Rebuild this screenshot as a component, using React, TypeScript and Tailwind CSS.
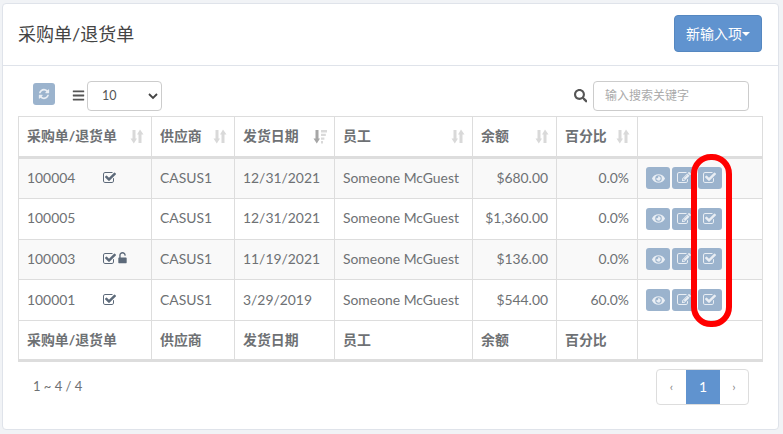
import { FaBars, FaEye, FaSearch } from "react-icons/fa";

const FONT = { fontFamily: 'Lato, "Noto Sans CJK SC", sans-serif' };

const rows = [
  { id: "100004", date: "12/31/2021", amount: "$680.00", pct: "0.0%", check: true, lock: false },
  { id: "100005", date: "12/31/2021", amount: "$1,360.00", pct: "0.0%", check: false, lock: false },
  { id: "100003", date: "11/19/2021", amount: "$136.00", pct: "0.0%", check: true, lock: true },
  { id: "100001", date: "3/29/2019", amount: "$544.00", pct: "60.0%", check: true, lock: false },
];

const headers = [
  { label: "采购单/退货单", w: "w-[133px]" },
  { label: "供应商", w: "w-[83px]" },
  { label: "发货日期", w: "w-[100px]", active: true },
  { label: "员工", w: "w-[138px]" },
  { label: "余额", w: "w-[84px]" },
  { label: "百分比", w: "w-[81px]" },
];

const ICONS = {
  check:
    "M1408 930v318q0 119-84.5 203.5t-203.5 84.5h-832q-119 0-203.5-84.5t-84.5-203.5v-832q0-119 84.5-203.5t203.5-84.5h832q63 0 117 25 15 7 18 23 3 17-9 29l-49 49q-10 10-23 10-3 0-9-2-23-6-45-6h-832q-66 0-113 47t-47 113v832q0 66 47 113t113 47h832q66 0 113-47t47-113v-254q0-13 9-22l64-64q10-10 23-10 6 0 12 3 20 8 20 29zm231-489l-814 814q-24 24-57 24t-57-24l-430-430q-24-24-24-57t24-57l110-110q24-24 57-24t57 24l263 263 647-647q24-24 57-24t57 24l110 110q24 24 24 57t-24 57z",
  edit:
    "M888 1184l116-116-152-152-116 116v56h96v96h56zm440-720q-16-16-33 1l-350 350q-17 17-1 33t33-1l350-350q17-17 1-33zm80 594v190q0 119-84.5 203.5t-203.5 84.5h-832q-119 0-203.5-84.5t-84.5-203.5v-832q0-119 84.5-203.5t203.5-84.5h832q63 0 117 25 15 7 18 23 3 17-9 29l-49 49q-14 14-32 8-23-6-45-6h-832q-66 0-113 47t-47 113v832q0 66 47 113t113 47h832q66 0 113-47t47-113v-126q0-13 9-22l64-64q15-15 35-7t20 29zm-96-738l288 288-672 672h-288v-288zm444 132l-92 92-288-288 92-92q28-28 68-28t68 28l152 152q28 28 28 68t-28 68z",
  refresh:
    "M1639 1056q0 5-1 7-64 268-268 434.5t-478 166.5q-146 0-282.5-55t-243.5-157l-129 129q-19 19-45 19t-45-19-19-45v-448q0-26 19-45t45-19h448q26 0 45 19t19 45-19 45l-137 137q71 66 161 102t187 36q134 0 250-65t186-179q11-17 53-117 8-23 30-23h192q13 0 22.5 9.5t9.5 22.5zm25-800v448q0 26-19 45t-45 19h-448q-26 0-45-19t-19-45 19-45l138-138q-148-137-349-137-134 0-250 65t-186 179q-11 17-53 117-8 23-30 23h-199q-13 0-22.5-9.5t-9.5-22.5v-7q65-268 270-434.5t480-166.5q146 0 284 55.5t245 156.5l130-129q19-19 45-19t45 19 19 45z",
  unlock:
    "M1376 768q40 0 68 28t28 68v576q0 40-28 68t-68 28h-960q-40 0-68-28t-28-68v-576q0-40 28-68t68-28h32v-320q0-185 131.5-316.5t316.5-131.5 316.5 131.5 131.5 316.5q0 26-19 45t-45 19h-64q-26 0-45-19t-19-45q0-106-75-181t-181-75-181 75-75 181v320h736z",
};

function FaIcon({ d, size, className }: { d: string; size: number; className?: string }) {
  return (
    <svg width={size} height={size} viewBox="0 0 1792 1792" className={className}>
      <path d={d} fill="currentColor" />
    </svg>
  );
}

function SortIcon({ active }: { active?: boolean }) {
  // 上下箭头,排序中的列换成阶梯形
  return (
    <svg width="14" height="15" viewBox="0 0 14 15" className="absolute right-[7px] top-[12px]">
      <path d="M0.5 9.5H2.5V1H5.5V9.5H7L3.8 14.5z" fill={active ? "#a6a6a6" : "#d9d9d9"} />
      {active ? (
        <path d="M8 1h6v2.4H8zM8 4.7h4.8v2.4H8zM8 8.4h3.4v2.4H8zM8 12h2v2.4H8z" fill="#d9d9d9" />
      ) : (
        <path d="M7 5.5H8.5V14H11.5V5.5H13.5L10 0.5z" fill="#d9d9d9" />
      )}
    </svg>
  );
}

function ActionButton({ children }: { children: React.ReactNode }) {
  return (
    <button
      type="button"
      className="flex h-[22px] w-[24px] items-center justify-center rounded-[3px] bg-[#9bb3cd] text-[#e9eef4]"
    >
      {children}
    </button>
  );
}

export default function App() {
  return (
    <div className="h-[434px] w-[783px] overflow-hidden bg-[#f1f3f6] pl-[2px] pt-[3px] text-[13.9px] text-[#6e7174]" style={FONT}>
      <div className="relative h-[427px] w-[777px] rounded-[4px] border border-[#dfe3ea] bg-white">
        <div className="flex h-[62px] items-center justify-between border-b border-[#dfe3ea] pl-[15px] pr-[16px]">
          <h1 className="text-[18px] font-normal text-[#444444]">采购单/退货单</h1>
          <button
            type="button"
            className="mt-[-3px] flex h-[37px] w-[88px] items-center justify-center rounded-[4px] border border-[#5587c0] bg-[#6093cf] text-[14px] text-white"
          >
            新输入项
            <span className="mt-[2px] border-x-[4px] border-t-[4px] border-x-transparent border-t-white" />
          </button>
        </div>

        <div className="flex h-[50px] items-end justify-between pb-[5px] pl-[30px] pr-[29px]">
          <div className="flex items-center">
            <button type="button" className="-mt-[4px] flex h-[22px] w-[22px] items-center justify-center rounded-[3px] bg-[#9bb3cd] text-[#e9eef4]">
              <FaIcon d={ICONS.refresh} size={12} />
            </button>
            <FaBars className="-mt-[2px] ml-[17px] mr-[2px] text-[13px] text-[#555555]" />
            <div className="relative flex h-[30px] w-[75px] items-center rounded-[4px] border border-[#cccccc] pl-[14px] pt-[1px] text-[12.5px] text-[#555555]">
              10
              <svg width="10" height="7" viewBox="0 0 10 7" className="absolute right-[3px] top-[11px]">
                <path d="M1 1l4 4 4-4" fill="none" stroke="#444444" strokeWidth="1.8" />
              </svg>
            </div>
          </div>
          <div className="flex items-center">
            <FaSearch className="mr-[6px] text-[13.5px] text-[#555555]" />
            <div className="flex h-[30px] w-[156px] items-center rounded-[4px] border border-[#cccccc] pl-[11px] text-[12px] text-[#aaaaaa]">
              输入搜索关键字
            </div>
          </div>
        </div>

        <div className="px-[15px]">
          <table className="w-[745px] table-fixed border-collapse border border-[#dddddd]">
            <thead>
              <tr className="h-[41px]">
                {headers.map((h) => (
                  <th key={h.label} className={`relative border border-b-[3px] border-[#dddddd] px-[8px] text-left font-bold ${h.w}`}>
                    {h.label}
                    <SortIcon active={h.active} />
                  </th>
                ))}
                <th className="border border-b-[3px] border-[#dddddd]" />
              </tr>
            </thead>
            <tbody>
              {rows.map((r, i) => (
                <tr key={r.id} className={`h-[40.75px] ${i % 2 === 0 ? "bg-[#f9f9f9]" : "bg-white"}`}>
                  <td className="border border-[#dddddd] px-[8px]">
                    <div className="flex items-center">
                      <span className="w-[76px]">{r.id}</span>
                      {r.check && <FaIcon d={ICONS.check} size={14} className="-mt-px text-[#5d6a7a]" />}
                      {r.lock && <FaIcon d={ICONS.unlock} size={13} className="-mt-[2px] -ml-px text-[#5d6a7a]" />}
                    </div>
                  </td>
                  <td className="border border-[#dddddd] px-[8px]">CASUS1</td>
                  <td className="border border-[#dddddd] px-[8px]">{r.date}</td>
                  <td className="border border-[#dddddd] px-[8px]">Someone McGuest</td>
                  <td className="border border-[#dddddd] px-[8px] text-right">{r.amount}</td>
                  <td className="border border-[#dddddd] px-[8px] text-right">{r.pct}</td>
                  <td className="border border-[#dddddd] px-[8px]">
                    <div className="flex gap-[2px]">
                      <ActionButton>
                        <FaEye className="text-[13px]" />
                      </ActionButton>
                      <ActionButton>
                        <FaIcon d={ICONS.edit} size={14} />
                      </ActionButton>
                      <ActionButton>
                        <FaIcon d={ICONS.check} size={14} />
                      </ActionButton>
                    </div>
                  </td>
                </tr>
              ))}
            </tbody>
            <tfoot>
              <tr className="h-[40px]">
                {headers.map((h) => (
                  <th key={h.label} className="border border-b-[3px] border-[#dddddd] px-[8px] text-left font-bold">
                    {h.label}
                  </th>
                ))}
                <th className="border border-b-[3px] border-[#dddddd]" />
              </tr>
            </tfoot>
          </table>
        </div>

        <div className="flex items-start justify-between pl-[30px] pr-[29px] pt-[7px]">
          <span className="mt-[8px] text-[13px]">1 ~ 4 / 4</span>
          <div className="flex h-[36px] w-[93px] overflow-hidden rounded-[4px] border border-[#dddddd] text-[#888888]">
            <span className="flex w-[29px] items-center justify-center text-[12px]">‹</span>
            <span className="flex w-[34px] items-center justify-center bg-[#6093cf] text-white">1</span>
            <span className="flex flex-1 items-center justify-center text-[12px]">›</span>
          </div>
        </div>

        {/* 红框标注 */}
        <div className="absolute left-[688px] top-[150px] h-[173px] w-[41px] rounded-[20px] border-[6px] border-[#ff0000]" />
      </div>
    </div>
  );
}
